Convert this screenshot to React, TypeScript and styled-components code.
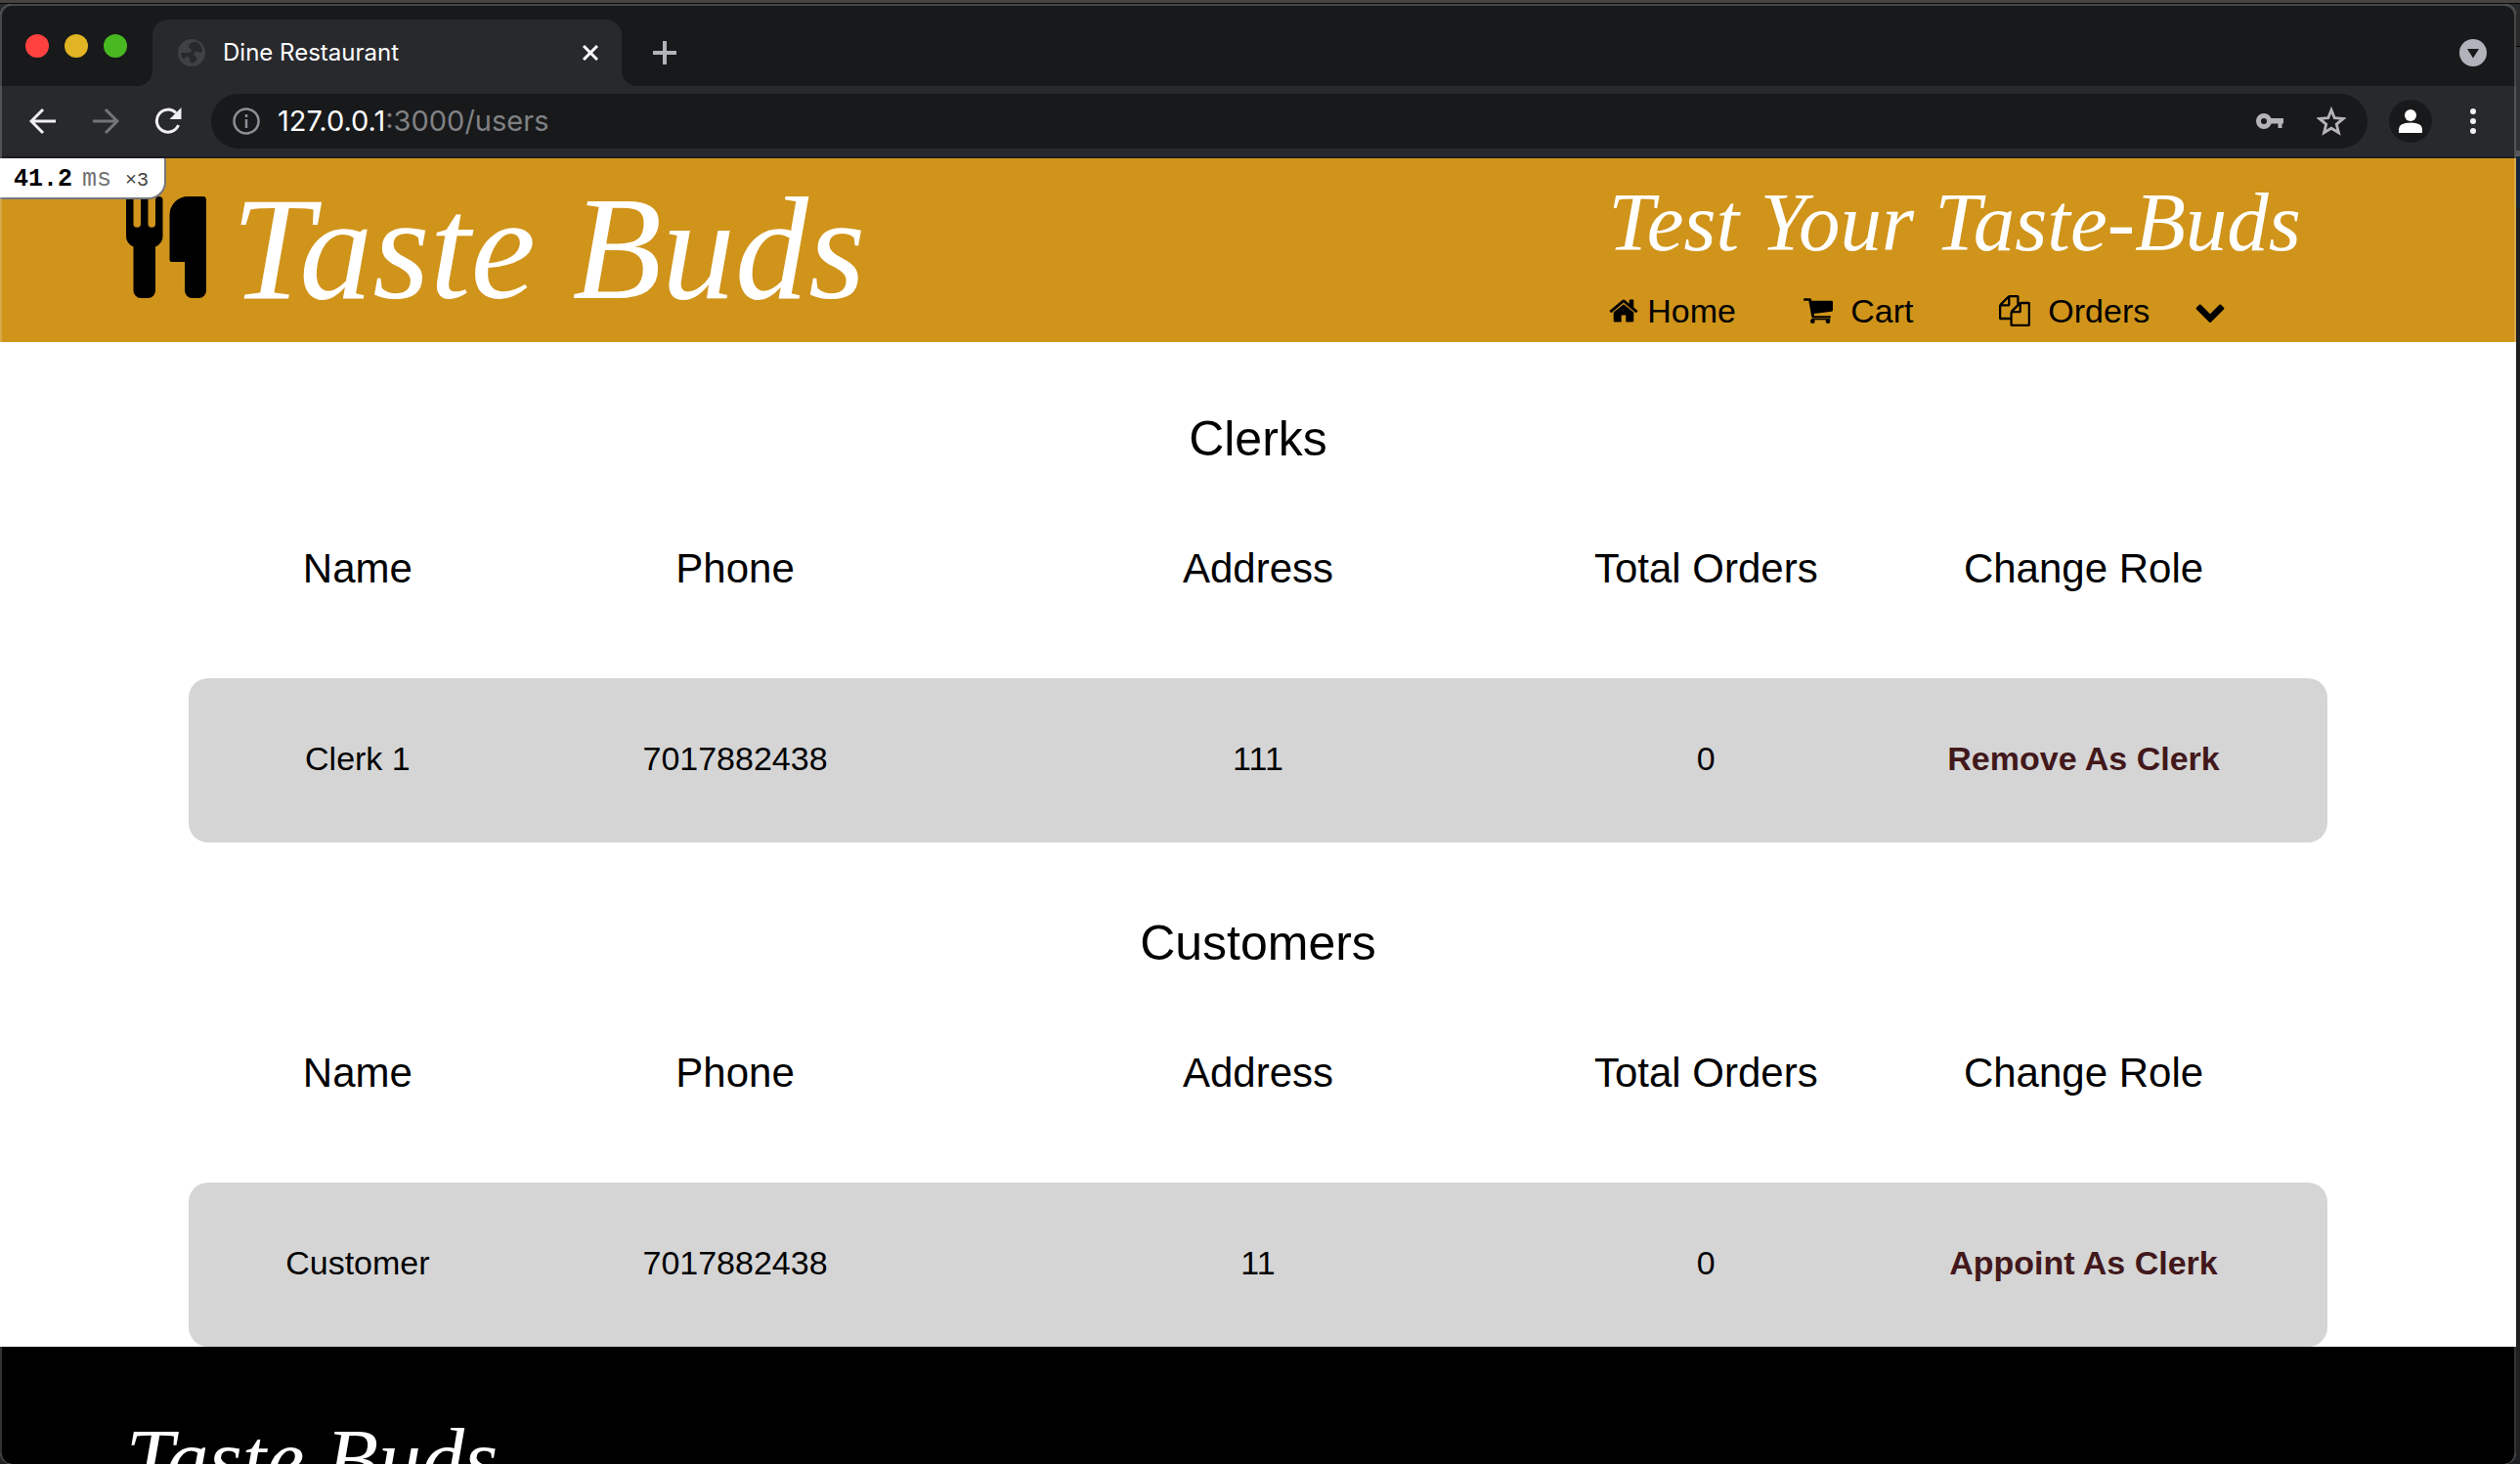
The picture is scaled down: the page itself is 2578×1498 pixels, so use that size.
import React from 'react';
import styled, { createGlobalStyle } from 'styled-components';

const GlobalStyle = createGlobalStyle`
  * { box-sizing: border-box; }
  body { margin: 0; background: #222324; }
  button { border: 0; padding: 0; background: none; cursor: pointer; }
  a { color: inherit; text-decoration: none; }
  svg { display: block; flex: none; }
`;

const sans = `"Liberation Sans", Arial, sans-serif`;
const script = `"Liberation Serif", cursive`;

const Desktop = styled.div`
  display: flex;
  flex-direction: column;
  height: 100vh;
  overflow: hidden;
  padding: 4px 4px 0 0;
  background:
    linear-gradient(#464340, #464340) 0 0 / 100% 3px no-repeat,
    linear-gradient(#0a0a0a, #0a0a0a) 0 3px / 100% 1px no-repeat,
    linear-gradient(#2a2a2a 47px, #000 47px 48px, #303236 48px 154px, #55585d 154px 160px, #14263c 160px 212px, #1f2021 212px);
`;

const BrowserWindow = styled.div`
  position: relative;
  flex: 1;
  min-height: 0;
  display: flex;
  flex-direction: column;
  overflow: hidden;
  border-radius: 12px;
  background: #fff;

  &::after {
    content: '';
    position: absolute;
    inset: 0;
    border: 2px solid rgba(255, 255, 255, 0.2);
    border-bottom: 0;
    border-radius: 12px;
    pointer-events: none;
  }
`;

const TabStrip = styled.div`
  flex: none;
  display: flex;
  align-items: center;
  height: 84px;
  padding: 2px 30px 0 26px;
  background: #18191b;
`;

const Lights = styled.div`
  display: flex;
  gap: 16px;
  margin-right: 26px;
`;

const Light = styled.button<{ $color: string }>`
  width: 24px;
  height: 24px;
  border-radius: 50%;
  background: ${(p) => p.$color};
`;

const Tab = styled.div`
  position: relative;
  align-self: flex-end;
  display: flex;
  align-items: center;
  gap: 18px;
  width: 480px;
  height: 68px;
  padding: 0 24px 0 26px;
  border-radius: 16px 16px 0 0;
  background: #28292d;
  color: #fff;
  font: 24px/32px Inter, ${sans};

  &::before,
  &::after {
    content: '';
    position: absolute;
    bottom: 0;
    width: 16px;
    height: 16px;
  }
  &::before {
    right: 100%;
    background: radial-gradient(circle at 0 0, transparent 16px, #28292d 16px);
  }
  &::after {
    left: 100%;
    background: radial-gradient(circle at 100% 0, transparent 16px, #28292d 16px);
  }
`;

const TabTitle = styled.span`
  flex: 1;
`;

const StripButton = styled.button<{ $end?: boolean }>`
  align-self: flex-end;
  display: flex;
  align-items: center;
  height: 68px;
  margin-left: ${(p) => (p.$end ? 'auto' : '32px')};
`;

const Toolbar = styled.div`
  flex: none;
  display: flex;
  align-items: center;
  height: 74px;
  padding: 0 40px 0 12px;
  border-bottom: 2px solid #1d1d1f;
  background: #28292d;
`;

const ToolButton = styled.button`
  display: flex;
  justify-content: center;
  width: 64px;
`;

const Omnibox = styled.div`
  flex: 1;
  display: flex;
  align-items: center;
  height: 56px;
  margin: 0 22px 0 12px;
  padding: 0 22px;
  border-radius: 28px;
  background: #18191b;
`;

const Address = styled.div`
  flex: 1;
  margin-left: 18px;
  color: #808184;
  font: 29px/36px Inter, ${sans};
`;

const Host = styled.span`
  color: #fff;
`;

const BoxButton = styled.button`
  margin-left: 34px;
`;

const Profile = styled.button`
  display: flex;
  align-items: center;
  justify-content: center;
  width: 44px;
  height: 44px;
  margin-right: 38px;
  border-radius: 50%;
  background: #18191b;
`;

const Page = styled.div`
  position: relative;
  flex: 1;
  min-height: 0;
  display: flex;
  flex-direction: column;
  color: #000;
  font-family: ${sans};
`;

const Profiler = styled.div`
  position: absolute;
  top: 0;
  left: 0;
  display: flex;
  align-items: baseline;
  gap: 10px;
  height: 42px;
  padding: 6px 16px 0 14px;
  border: solid #77787b;
  border-width: 0 2px 2px 0;
  border-radius: 0 0 18px 0;
  background: #fff;
  color: #000;
  font: 25px/32px "Liberation Mono", monospace;
`;

const Timing = styled.span`
  font-weight: 700;
`;

const Unit = styled.span`
  color: #737373;
`;

const Count = styled.span`
  margin-left: 4px;
  color: #444;
  font-size: 20px;
`;

const Header = styled.header`
  flex: none;
  display: flex;
  align-items: flex-start;
  justify-content: space-between;
  padding: 20px 5% 12px;
  background: #d0941b;
`;

const Brand = styled.a`
  display: flex;
  align-items: baseline;
  gap: 26px;
`;

const Wordmark = styled.span<{ $small?: boolean }>`
  color: #fff;
  font-family: ${script};
  font-style: italic;
  font-size: ${(p) => (p.$small ? '88px' : '150px')};
  line-height: ${(p) => (p.$small ? '88px' : '144px')};
  white-space: nowrap;
`;

const HeaderSide = styled.div`
  display: flex;
  flex-direction: column;
  gap: 30px;
  width: 800px;
  padding-top: 4px;
`;

const Tagline = styled.div`
  color: #fff;
  font: italic 85px/82px ${script};
  white-space: nowrap;
`;

const Nav = styled.nav`
  display: grid;
  grid-template-columns: repeat(4, 200px);
  align-items: center;
`;

const NavLink = styled.a<{ $gap: number }>`
  display: flex;
  align-items: center;
  gap: ${(p) => p.$gap}px;
  font-size: 34px;
  line-height: 40px;
`;

const Section = styled.section`
  padding-top: 69px;

  & + & {
    padding-top: 73px;
  }
`;

const SectionTitle = styled.h2`
  margin: 0;
  font-size: 50px;
  font-weight: 400;
  line-height: 60px;
  text-align: center;
`;

const Table = styled.table`
  width: 85%;
  margin: 0 auto;
  border-spacing: 0;
  table-layout: fixed;
  text-align: center;
`;

const Col = styled.col<{ $share: number }>`
  width: ${(p) => p.$share}%;
`;

const HeadCell = styled.th`
  padding: 79px 0 88px;
  font-size: 42px;
  font-weight: 400;
  line-height: 48px;
`;

const Cell = styled.td`
  padding: 62px 0 66px;
  background: #d5d5d5;
  font-size: 34px;
  line-height: 40px;

  &:first-child {
    border-radius: 20px 0 0 20px;
  }
  &:last-child {
    border-radius: 0 20px 20px 0;
  }
`;

const RoleButton = styled.button`
  color: #42181b;
  font: bold 34px/40px ${sans};
`;

const Footer = styled.footer`
  flex: 1;
  min-height: 0;
  padding: 72px 5% 0;
  background: #000;
`;

const FaIcon = ({ d }: { d: string }) => (
  <svg width="32" height="32" viewBox="0 0 1792 1792" fill="#000">
    <path d={d} />
  </svg>
);

const HOME =
  'M1472 992v480q0 26-19 45t-45 19h-384v-384h-256v384h-384q-26 0-45-19t-19-45v-480q0-1 .5-3t.5-3l575-474 575 474q1 2 1 6zm223-69l-62 74q-8 9-21 11h-3q-13 0-21-7l-692-577-692 577q-12 8-24 7-13-2-21-11l-62-74q-8-10-7-23.5t11-21.5l719-599q32-26 76-26t76 26l244 204v-195q0-14 9-23t23-9h192q14 0 23 9t9 23v408l219 182q10 8 11 21.5t-7 23.5z';
const FILES =
  'M1696 384q40 0 68 28t28 68v1216q0 40-28 68t-68 28h-960q-40 0-68-28t-28-68v-288h-544q-40 0-68-28t-28-68v-672q0-40 20-88t48-76l408-408q28-28 76-48t88-20h416q40 0 68 28t28 68v328q68-40 128-40h416zm-544 213l-299 299h299v-299zm-640-384l-299 299h299v-299zm196 647l316-316v-416h-384v416q0 40-28 68t-68 28h-416v640h512v-256q0-40 20-88t48-76zm956 804v-1152h-384v416q0 40-28 68t-68 28h-416v640h896z';
const CHEVRON =
  'M1683 808l-742 741q-19 19-45 19t-45-19l-742-741q-19-19-19-45.5t19-45.5l166-165q19-19 45-19t45 19l531 531 531-531q19-19 45-19t45 19l166 165q19 19 19 45.5t-19 45.5z';

const CartIcon = () => (
  <svg width="30" height="26" viewBox="0 0 90 78" fill="#000">
    <path d="M2 1h18q3 0 4 3l1 4h61q4 0 4 4v25q0 4-4 4l-54 7 1 7h48q3 0 3 3t-3 3H29q-3 0-4-3L16 8H2Q0 8 0 5t2-4z" />
    <path d="M26 62h56v5H26z" />
    <circle cx="28" cy="71" r="7" />
    <circle cx="75" cy="71" r="7" />
  </svg>
);

const CutleryIcon = () => (
  <svg width="82" height="104" viewBox="0 0 82 104" fill="#000">
    <path d="M0 3.500Q0 0 3.500 0Q7.500 0 7.500 3.500V28a3.700 3.700 0 0 0 7.500 0V3.500Q15 0 18.700 0Q22.500 0 22.500 3.500V28a3.700 3.700 0 0 0 7.500 0V3.500Q30 0 33.500 0Q37.500 0 37.500 3.500V41Q37.500 48 30 51.500V96.500a7.500 7.500 0 0 1-7.500 7.500H15a7.500 7.500 0 0 1-7.500-7.500V51.500Q0 48 0 41z" />
    <path d="M63.500 0H78.500Q82 0 82 3.500V96.500a7.500 7.500 0 0 1-7.500 7.500H67.500a7.500 7.500 0 0 1-7.500-7.500V67H46.500Q44.500 67 44.500 65V19Q44.500 11 50 5.500T63.500 0z" />
  </svg>
);

const GlobeIcon = () => (
  <svg width="28" height="28" viewBox="0 0 28 28">
    <circle cx="14" cy="14" r="14" fill="#404145" />
    <path
      d="M18 3c-4 0-7 2-7 4.500s3 1.500 3 4-3 2.500-6 2.500-4.500 0-5 .5c.3 3 1.500 5 3 6.500 1.500-1 1-3 3-3s3 1 3 3 .5 3.500 2.500 3.500 5-2 5-4.500-3-2.500-3-5 2-2.500 4-2 3 1.500 4.500 0C24.500 8 22 3 18 3z"
      fill="#28292d"
    />
  </svg>
);

const ArrowIcon = ({ color, flip }: { color: string; flip?: boolean }) => (
  <svg width="28" height="28" viewBox="0 0 28 28" fill="none" stroke={color} strokeWidth="3">
    <path d={flip ? 'M1 14h24M14 2l12 12-12 12' : 'M27 14H3M14 2L2 14l12 12'} />
  </svg>
);

const ReloadIcon = () => (
  <svg width="28" height="28" viewBox="0 0 28 28">
    <path d="M24.500 18A11.500 11.500 0 1 1 22 5.500" fill="none" stroke="#f1f1f3" strokeWidth="3" />
    <path d="M27.500 0v12H15.500z" fill="#f1f1f3" />
  </svg>
);

const InfoIcon = () => (
  <svg width="28" height="28" viewBox="0 0 28 28" fill="none" stroke="#8b9096" strokeWidth="2.500">
    <circle cx="14" cy="14" r="12.500" />
    <path d="M14 12v9M14 7v3" />
  </svg>
);

const KeyIcon = () => (
  <svg width="28" height="16" viewBox="0 0 28 16">
    <circle cx="8" cy="8" r="5.500" fill="none" stroke="#b4b4b6" strokeWidth="5" />
    <path d="M15 5h13v5.500h-1.500V15h-4v-4.500H15z" fill="#b4b4b6" />
  </svg>
);

const StarIcon = () => (
  <svg width="30" height="30" viewBox="0 0 30 30" fill="none" stroke="#b4b4b6" strokeWidth="2.800">
    <path d="M15 3.500l3.200 8.200 9 .7-6.900 5.700 2.200 8.700L15 22.200l-7.500 4.600 2.200-8.700-6.900-5.700 9-.7z" />
  </svg>
);

const columns = [
  { label: 'Name', share: 15.8 },
  { label: 'Phone', share: 19.5 },
  { label: 'Address', share: 29.4 },
  { label: 'Total Orders', share: 12.5 },
  { label: 'Change Role', share: 22.8 },
];

type Group = { title: string; row: string[]; action: string };

const groups: Group[] = [
  { title: 'Clerks', row: ['Clerk 1', '7017882438', '111', '0'], action: 'Remove As Clerk' },
  { title: 'Customers', row: ['Customer', '7017882438', '11', '0'], action: 'Appoint As Clerk' },
];

const UserGroup = ({ title, row, action }: Group) => (
  <Section>
    <SectionTitle>{title}</SectionTitle>
    <Table aria-label={title}>
      <colgroup>
        {columns.map((c) => (
          <Col key={c.label} $share={c.share} />
        ))}
      </colgroup>
      <thead>
        <tr>
          {columns.map((c) => (
            <HeadCell key={c.label} scope="col">
              {c.label}
            </HeadCell>
          ))}
        </tr>
      </thead>
      <tbody>
        <tr>
          {row.map((value, i) => (
            <Cell key={i}>{value}</Cell>
          ))}
          <Cell>
            <RoleButton type="button">{action}</RoleButton>
          </Cell>
        </tr>
      </tbody>
    </Table>
  </Section>
);

export default function App() {
  return (
    <Desktop>
      <GlobalStyle />
      <BrowserWindow>
        <TabStrip>
          <Lights>
            <Light $color="#ff4140" aria-label="Close window" />
            <Light $color="#e0b422" aria-label="Minimise window" />
            <Light $color="#48b921" aria-label="Zoom window" />
          </Lights>
          <Tab>
            <GlobeIcon />
            <TabTitle>Dine Restaurant</TabTitle>
            <button aria-label="Close tab">
              <svg width="16" height="16" viewBox="0 0 16 16" stroke="#fff" strokeWidth="3">
                <path d="M1 1l14 14M15 1L1 15" />
              </svg>
            </button>
          </Tab>
          <StripButton aria-label="New tab">
            <svg width="24" height="24" viewBox="0 0 24 24" stroke="#b0b3ba" strokeWidth="4">
              <path d="M12 0v24M0 12h24" />
            </svg>
          </StripButton>
          <StripButton $end aria-label="Search tabs">
            <svg width="28" height="28" viewBox="0 0 28 28">
              <circle cx="14" cy="14" r="14" fill="#b0b3ba" />
              <path d="M8 10h12l-6 9.500z" fill="#18191b" />
            </svg>
          </StripButton>
        </TabStrip>
        <Toolbar>
          <ToolButton aria-label="Back">
            <ArrowIcon color="#f1f1f3" />
          </ToolButton>
          <ToolButton aria-label="Forward">
            <ArrowIcon color="#747578" flip />
          </ToolButton>
          <ToolButton aria-label="Reload">
            <ReloadIcon />
          </ToolButton>
          <Omnibox>
            <InfoIcon />
            <Address role="textbox" aria-label="Address" contentEditable suppressContentEditableWarning spellCheck={false}>
              <Host>127.0.0.1</Host>:3000/users
            </Address>
            <BoxButton aria-label="Passwords">
              <KeyIcon />
            </BoxButton>
            <BoxButton aria-label="Bookmark">
              <StarIcon />
            </BoxButton>
          </Omnibox>
          <Profile aria-label="Profile">
            <svg width="24" height="24" viewBox="0 0 24 24" fill="#fff">
              <circle cx="12" cy="6" r="6" />
              <path d="M0 24v-4q0-6.500 12-6.500T24 20v4z" />
            </svg>
          </Profile>
          <button aria-label="Menu">
            <svg width="8" height="28" viewBox="0 0 8 28" fill="#f1f1f3">
              <circle cx="4" cy="4" r="3" />
              <circle cx="4" cy="14" r="3" />
              <circle cx="4" cy="24" r="3" />
            </svg>
          </button>
        </Toolbar>
        <Page>
          <Header>
            <Brand href="#">
              <CutleryIcon />
              <Wordmark>Taste Buds</Wordmark>
            </Brand>
            <HeaderSide>
              <Tagline>Test Your Taste-Buds</Tagline>
              <Nav>
                <NavLink href="#" $gap={8}>
                  <FaIcon d={HOME} />
                  Home
                </NavLink>
                <NavLink href="#" $gap={18}>
                  <CartIcon />
                  Cart
                </NavLink>
                <NavLink href="#" $gap={18}>
                  <FaIcon d={FILES} />
                  Orders
                </NavLink>
                <NavLink as="button" $gap={0} aria-label="More">
                  <FaIcon d={CHEVRON} />
                </NavLink>
              </Nav>
            </HeaderSide>
          </Header>
          <Profiler>
            <Timing>41.2</Timing>
            <Unit>ms</Unit>
            <Count>×3</Count>
          </Profiler>
          <main>
            {groups.map((g) => (
              <UserGroup key={g.title} {...g} />
            ))}
          </main>
          <Footer>
            <Wordmark $small>Taste Buds</Wordmark>
          </Footer>
        </Page>
      </BrowserWindow>
    </Desktop>
  );
}
